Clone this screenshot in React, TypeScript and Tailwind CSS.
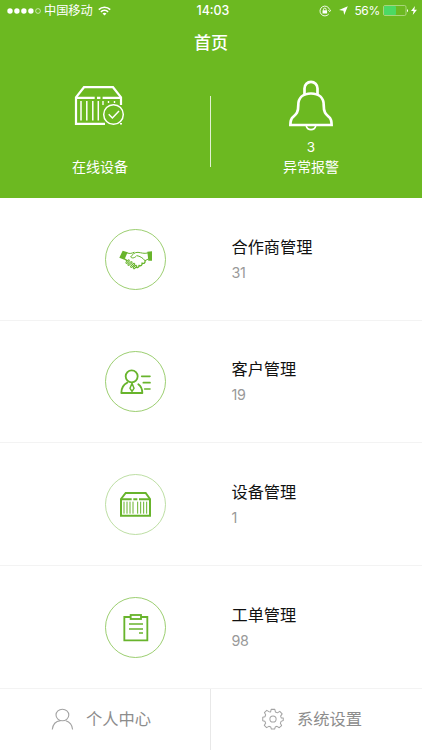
import React from 'react';

// Menu row definition
type MenuItem = {
  id: number;
  title: string;
  count: number;
  icon: React.ReactNode;
  ring: string;
  height: string;
};

const HandshakeIcon = () => (
  <g fill="none" stroke="#68b42c" strokeWidth="4" strokeLinejoin="round" strokeLinecap="round">
    <path d="M83 92L98 97L88 119L73 113Z" fill="#68b42c" stroke="none" />
    <path d="M157 95L171 94V122H160Z" fill="#68b42c" stroke="none" />
    <path d="M97 99C105 102 110 100 117 97" strokeWidth="3" />
    <path d="M158 99C146 102 139 98 129 97C119 96 112 104 107 111C113 117 121 112 125 107C134 108 144 114 150 122L158 118" strokeWidth="3" />
    <path d="M89 117L95 121" />
    <path d="M150 122C152 129 146 132 141 129C143 136 137 139 132 136C133 142 126 144 122 141" />
    <path d="M95 128L101 122M101 134L109 127M109 140L117 132M117 144L123 138" strokeWidth="7.5" />
    <path d="M95 128L101 122M101 134L109 127M109 140L117 132M117 144L123 138" stroke="#fff" strokeWidth="2" />
  </g>
);

const CustomerIcon = () => (
  <g fill="none" stroke="#68b42c" strokeWidth="5.5" strokeLinecap="round" strokeLinejoin="round">
    <circle cx="110" cy="101" r="18" />
    <path d="M97 120C85 126 79 137 79 151H142C142 140 138 131 130 125" />
    <path d="M111 122L105 137L111 146L117 137Z" strokeWidth="4.5" />
    <path d="M140 101H165M145 120H165M149 139H165" strokeWidth="5" />
  </g>
);

const ContainerIcon = () => (
  <g fill="none" stroke="#68b42c" strokeWidth="6">
    <path d="M78 102L92 84H152L165 102V152H78Z" />
    <path d="M78 103H110M115 103H127M132 103H165" />
    <path d="M87 110V146M96 110V146M105 110V146M114 110V146M128 110V146M137 110V146M146 110V146M155 110V146" strokeWidth="3" />
  </g>
);

const ClipboardIcon = () => (
  <g fill="none" stroke="#68b42c" strokeWidth="5.5">
    <path d="M107 85H88V155H157V85H138" />
    <rect x="107" y="79" width="31" height="12" />
    <path d="M102 106H144M102 121H144M132 133H144" strokeWidth="4.5" />
  </g>
);

const menuItems: MenuItem[] = [
  { id: 1, title: '合作商管理', count: 31, icon: <HandshakeIcon />, ring: '#8cc65a', height: 'h-[123px]' },
  { id: 2, title: '客户管理', count: 19, icon: <CustomerIcon />, ring: '#8cc65a', height: 'h-[122px]' },
  { id: 3, title: '设备管理', count: 1, icon: <ContainerIcon />, ring: '#b3d996', height: 'h-[123px]' },
  { id: 4, title: '工单管理', count: 98, icon: <ClipboardIcon />, ring: '#8cc65a', height: 'h-[123px]' },
];

const StatusBar = () => (
  <div className="grid h-[21px] grid-cols-3 items-center pl-[7px] pr-[5px] text-[12px] leading-[21px]">
    <div className="flex items-center">
      <svg width="35" height="8" viewBox="0 0 35 8" fill="#fff">
        <circle cx="3" cy="4" r="2.7" />
        <circle cx="9.9" cy="4" r="2.7" />
        <circle cx="16.9" cy="4" r="2.7" />
        <circle cx="23.9" cy="4" r="2.7" />
        <circle cx="31" cy="4" r="2.4" fill="none" stroke="#fff" strokeWidth="0.6" />
      </svg>
      <span className="ml-[2px] whitespace-nowrap text-[12.2px]">中国移动</span>
      <svg className="ml-[5px]" width="13" height="10" viewBox="0 0 13 10" fill="none" stroke="#fff" strokeWidth="1.6">
        <path d="M0.8 3.6C4 0.4 9 0.4 12.2 3.6M2.9 5.9C5 3.9 8 3.9 10.1 5.9" />
        <path d="M4.5 7.6C5.7 6.6 7.3 6.6 8.5 7.6L6.5 9.6Z" fill="#fff" stroke="none" />
      </svg>
    </div>
    <div className="pl-[2px] text-center text-[12.4px] font-medium">14:03</div>
    <div className="flex items-center justify-end">
      <svg width="12" height="12" viewBox="0 0 12 12" fill="none" stroke="#fff">
        <path d="M10.6 4.6A4.9 4.9 0 1 0 9.8 9M9.2 5.1L10.8 6.6L11.8 4.7" strokeWidth="0.9" />
        <rect x="3.5" y="5.3" width="4.6" height="3.2" fill="#fff" stroke="none" />
        <path d="M4.5 5.5V4.4A1.3 1.3 0 0 1 7.1 4.4V5.5" strokeWidth="0.9" />
      </svg>
      <svg className="ml-[8px]" width="9" height="9" viewBox="0 0 9 9" fill="#fff">
        <path d="M8.8 0.2L5.2 9L4.4 4.8L0 4Z" />
      </svg>
      <span className="ml-[6px] text-[12px] tracking-[-0.3px]">56%</span>
      <svg className="ml-[3px]" width="26" height="11" viewBox="0 0 26 11">
        <rect x="0.5" y="0.5" width="22.5" height="10" rx="1.5" fill="none" stroke="#b7dc92" strokeWidth="0.8" />
        <rect x="1" y="1" width="12" height="9" rx="1" fill="#4cd964" />
        <path d="M24 4V7.2C25.4 6.6 25.4 4.6 24 4Z" fill="#fff" />
      </svg>
      <svg className="ml-[2px]" width="6" height="9" viewBox="0 0 6 9" fill="#fff">
        <path d="M4 0L0 5H2.6L1.7 9L6 3.8H3.3Z" />
      </svg>
    </div>
  </div>
);

const MenuRow = ({ item }: { item: MenuItem }) => (
  <div className={`flex items-center border-b border-[#f3f3f3] pl-[105px] ${item.height}`}>
    <svg width="61" height="61" viewBox={item.id % 2 === 0 ? '30 25 183 183' : '30 27 183 183'}>
      <circle
        cx="121.5"
        cy={item.id % 2 === 0 ? 116.5 : 118.5}
        r="90"
        fill="none"
        stroke={item.ring}
        strokeWidth="2.6"
      />
      {item.icon}
    </svg>
    <div className="ml-[65.5px]">
      <div className="text-[16.2px] leading-[26px] text-[#111]">{item.title}</div>
      <div className="text-[14.3px] leading-[25px] tracking-[-0.3px] text-[#999]">{item.count}</div>
    </div>
  </div>
);

export default function App() {
  return (
    <div className="flex h-[750px] w-[422px] flex-col overflow-hidden bg-white font-['Inter','Noto_Sans_CJK_SC',sans-serif]">
      {/* Header */}
      <header className="h-[198px] shrink-0 bg-[#6cb921] text-white">
        <StatusBar />
        <h1 className="text-center text-[17px] font-medium leading-[44px]">首页</h1>
        <div className="flex items-start">
          <div className="flex w-[210px] flex-col items-center pr-[10px]">
            <svg className="mt-5" width="52" height="42" viewBox="0 0 52 42" fill="none" stroke="#fff" strokeWidth="2.2">
              <path d="M31 38.8H2V12.3L10 2.2H39L47 12.3V20" />
              <path d="M2 12.8H20.7M23 12.8H26.4M28.6 12.8H47" />
              <path d="M7 16V35.5M12.8 16V35.5M18.8 16V35.5M24.3 16V35.5" strokeWidth="1.5" />
              <path d="M29 16V20M34.5 16V18M40.5 16V18M46 38.8H48" strokeWidth="1.4" />
              <circle cx="39.5" cy="29.5" r="9.8" strokeWidth="1.5" />
              <path d="M34.7 29.2L38.4 33L45 26" strokeWidth="1.5" />
            </svg>
            <div className="mt-[30px] text-[14px] leading-5">在线设备</div>
          </div>
          <div className="mt-[31px] h-[71px] w-px bg-white/80" />
          <div className="flex flex-1 flex-col items-center pr-[11px]">
            <svg className="mt-[15px]" width="46" height="53" viewBox="0 0 46 53" fill="none" stroke="#fff" strokeWidth="2.7">
              <path d="M16.5 14V8.4A6.5 6.5 0 0 1 29.5 8.4V14" />
              <path d="M23 13.5C14.5 13.5 10.3 18.5 10.3 25C10.3 32.5 8.5 34 5 37C2.6 39 2.4 41 2.4 45H43.6C43.6 41 43.4 39 41 37C37.5 34 35.7 32.5 35.7 25C35.7 18.5 31.5 13.5 23 13.5Z" />
              <path d="M18.2 46A5 5 0 0 0 27.8 46" strokeWidth="1.6" />
            </svg>
            <div className="mt-[4px] text-[13.5px] leading-5">3</div>
            <div className="text-[14px] leading-5">异常报警</div>
          </div>
        </div>
      </header>

      {/* Menu list */}
      <main className="shrink-0">
        {menuItems.map(item => (
          <MenuRow key={item.id} item={item} />
        ))}
      </main>

      {/* Bottom navigation */}
      <nav className="flex h-[61px] text-[16.3px] text-[#8c8c8c]">
        <button className="flex w-[211px] items-center border-r border-[#e8e8e8] pl-[51px]">
          <svg width="23" height="23" viewBox="0 0 23 23" fill="none" stroke="#a3a3a3" strokeWidth="1.1">
            <ellipse cx="11.4" cy="7" rx="6.4" ry="5.8" />
            <path d="M1.3 21.5C1.8 16.5 5 13.2 9.5 12.6M14.8 12.8C19 14 21.2 17.3 21.6 21.5" />
          </svg>
          <span className="ml-3">个人中心</span>
        </button>
        <button className="flex flex-1 items-center pl-[51px]">
          <svg className="mb-[2px]" width="22" height="22" viewBox="0 0 24 24" fill="none" stroke="#a3a3a3" strokeWidth="1.1" strokeLinejoin="round">
            <circle cx="12" cy="12" r="3.4" />
            <path d="M10 1.5H14L14.7 4.4L16.8 5.3L19.4 3.7L22 6.4L20.3 8.9L21.1 11L23.2 11V13.6L20.8 14.6L20 16.7L21.4 19.2L18.8 21.5L16.4 20L14.4 20.8L13.8 23H10.2L9.6 20.8L7.5 20L5 21.4L2.5 18.9L4 16.5L3.1 14.4L0.8 13.8V10.2L3.2 9.5L4 7.4L2.6 5L5.2 2.6L7.6 4L9.4 4.3Z" />
          </svg>
          <span className="ml-[13px]">系统设置</span>
        </button>
      </nav>
    </div>
  );
}
